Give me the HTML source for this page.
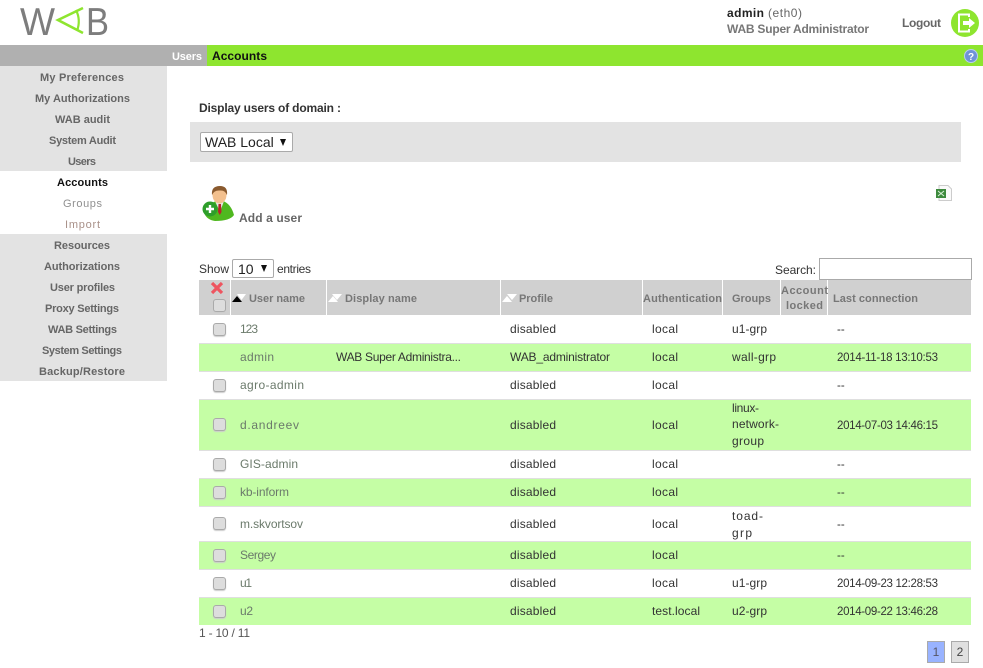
<!DOCTYPE html>
<html><head><meta charset="utf-8"><title>WAB Accounts</title>
<style>
html,body{margin:0;padding:0;background:#fff;width:983px;height:668px;overflow:hidden}
svg{position:absolute;left:0;top:0}
svg text{font-family:"Liberation Sans",sans-serif;font-size:12px;fill:#333}
.m text{text-anchor:middle;font-weight:bold;fill:#666;font-size:11px}
.b{font-weight:bold}
.h text{font-weight:bold;fill:#777;font-size:11px}
.u text{fill:#6b7a6b}
.d text{font-size:11.5px}
.cb{position:absolute;left:213px;width:11px;height:11px;background:#ddd;border:1px solid #aaa;border-radius:3px;box-shadow:0 1px 1px #ccc}
select,input{position:absolute;box-sizing:border-box;font-family:"Liberation Sans",sans-serif;background:#fff;margin:0;color:#222}
select{appearance:none;-webkit-appearance:none}
.ar{position:absolute;width:0;height:0;border-left:3.5px solid transparent;border-right:3.5px solid transparent;border-top:7px solid #111}
.pg{position:absolute;top:641px;width:16px;height:20px;border:1px solid #aaa;font:12px/20px "Liberation Sans",sans-serif;text-align:center;color:#444}
</style></head><body>
<svg width="983" height="668" viewBox="0 0 983 668">
<!-- bars -->
<rect x="0" y="45" width="207" height="21" fill="#b0b0b0"/>
<rect x="207" y="45" width="776" height="21" fill="#8ee52f"/>
<rect x="0" y="66" width="167" height="105" fill="#e3e3e3"/>
<rect x="0" y="234" width="167" height="147" fill="#e3e3e3"/>
<rect x="190" y="122" width="771" height="40" fill="#e3e3e3"/>
<!-- logo -->
<text x="20" y="35" textLength="35" lengthAdjust="spacingAndGlyphs" style="font-size:39px;fill:#7d7d7d">W</text>
<text x="86" y="35" textLength="23" lengthAdjust="spacingAndGlyphs" style="font-size:39px;fill:#7d7d7d">B</text>
<path d="M83 8 L58 20 L83 33" fill="none" stroke="#8ee52f" stroke-width="2.600"/>
<path d="M76 10 Q81 20 77 31" fill="none" stroke="#8ee52f" stroke-width="2.200"/>
<!-- user info -->
<text x="727" y="17" textLength="37" class="b" style="fill:#222">admin</text>
<text x="768" y="17" textLength="34" style="fill:#666">(eth0)</text>
<text x="727" y="33" textLength="142" class="b" style="fill:#777">WAB Super Administrator</text>
<text x="902" y="27" textLength="39" class="b" style="fill:#666">Logout</text>
<circle cx="965" cy="23" r="14" fill="#8ee52f"/>
<path d="M969 17 V14.500 H959 V31.500 H969 V29" fill="none" stroke="#fff" stroke-width="2"/>
<path d="M963 21 H969 V18 L975 23 L969 28 V25 H963 Z" fill="#fff"/>
<circle cx="971" cy="56" r="6.500" fill="#6f93d8" stroke="#b9cdf0"/>
<text x="971" y="60" text-anchor="middle" class="b" style="font-size:10px;fill:#fff">?</text>
<text x="172" y="60" textLength="30" class="b" style="fill:#fff;font-size:11px">Users</text>
<text x="212" y="60" textLength="55" class="b" style="fill:#111">Accounts</text>
<!-- sidebar -->
<g class="m">
<text x="82" y="81" textLength="84">My Preferences</text>
<text x="82.500" y="102" textLength="95">My Authorizations</text>
<text x="82.500" y="123" textLength="55">WAB audit</text>
<text x="82.500" y="144" textLength="67">System Audit</text>
<text x="82" y="165" textLength="28">Users</text>
<text x="82.500" y="186" textLength="51" style="fill:#111">Accounts</text>
<text x="82.500" y="207" textLength="39" style="fill:#909090;font-weight:normal">Groups</text>
<text x="82.500" y="228" textLength="35" style="fill:#a89088;font-weight:normal">Import</text>
<text x="82" y="249" textLength="56">Resources</text>
<text x="82" y="270" textLength="76">Authorizations</text>
<text x="82.500" y="291" textLength="65">User profiles</text>
<text x="82" y="312" textLength="74">Proxy Settings</text>
<text x="82.500" y="333" textLength="69">WAB Settings</text>
<text x="82" y="354" textLength="80">System Settings</text>
<text x="82" y="375" textLength="86">Backup/Restore</text>
</g>
<!-- content titles -->
<text x="199" y="112" textLength="142" class="b">Display users of domain :</text>
<text x="239" y="222" textLength="63" class="b" style="fill:#666">Add a user</text>
<!-- add user icon -->
<path d="M204 213 Q208 203 217 201 L223 201 Q231 204 234 215 Q230 221 215 221 Q207 220 204 213Z" fill="#4fb81f"/>
<path d="M215 201 L220 212 L224 201Z" fill="#e8e8e8"/>
<path d="M218.500 204 L221 204 L221.500 212 L219.800 215 L218 212Z" fill="#b8242a"/>
<ellipse cx="219.500" cy="195" rx="7" ry="8.500" fill="#f3c08e"/>
<path d="M212 195 Q211 186 220 186 Q228 186 227 195 Q225 190 220 190.500 Q214 190 212 195Z" fill="#8a5a2e"/>
<circle cx="210" cy="209" r="7.500" fill="#2e9e2a"/>
<path d="M210 205 V213 M206 209 H214" stroke="#fff" stroke-width="2.400"/>
<!-- xls icon -->
<path d="M939 185.500 H948 L951.500 189 V200.500 H939Z" fill="#fafafa" stroke="#ccc"/>
<rect x="936" y="189" width="10" height="9" fill="#3d8a3d"/>
<path d="M938 191 L944 196 M944 191 L938 196" stroke="#d8f0d8"/>
<!-- controls labels -->
<text x="199" y="273" textLength="30">Show</text>
<text x="277" y="273" textLength="34">entries</text>
<text x="775" y="274" textLength="41">Search:</text>
<!-- table header -->
<rect x="199" y="280" width="772" height="35" fill="#d0d0d0"/>
<g fill="#fff">
<rect x="230" y="280" width="1" height="35"/><rect x="326" y="280" width="1" height="35"/>
<rect x="500" y="280" width="1" height="35"/><rect x="642" y="280" width="1" height="35"/>
<rect x="722" y="280" width="1" height="35"/><rect x="780" y="280" width="1" height="35"/>
<rect x="827" y="280" width="1" height="35"/>
<path d="M237 294 H246 L241.500 300Z"/>
<path d="M332 294 H342 L337 300Z"/><path d="M328 302 L333 296 L338 302Z"/>
<path d="M507 294 H517 L512 300Z"/><path d="M502 302 L507 296 L512 302Z"/>
</g>
<path d="M232 302 L237 296 L242 302Z" fill="#000"/>
<path d="M212 283 L222 293 M222 283 L212 293" stroke="#ee5560" stroke-width="3.200"/>
<g class="h">
<text x="249" y="302" textLength="56">User name</text>
<text x="345" y="302" textLength="72">Display name</text>
<text x="519" y="302" textLength="34">Profile</text>
<text x="643" y="302" textLength="79">Authentication</text>
<text x="732" y="302" textLength="39">Groups</text>
<text x="781" y="294" textLength="47">Account</text>
<text x="786" y="309" textLength="37">locked</text>
<text x="833" y="302" textLength="85">Last connection</text>
</g>
<!-- rows -->
<g fill="#c5fea5">
<rect x="199" y="344" width="772" height="27"/>
<rect x="199" y="400" width="772" height="50"/>
<rect x="199" y="479" width="772" height="27"/>
<rect x="199" y="542" width="772" height="27"/>
<rect x="199" y="598" width="772" height="27"/>
</g>
<g fill="#dfdfdf">
<rect x="199" y="343" width="772" height="1"/><rect x="199" y="371" width="772" height="1"/>
<rect x="199" y="399" width="772" height="1"/><rect x="199" y="450" width="772" height="1"/>
<rect x="199" y="478" width="772" height="1"/><rect x="199" y="506" width="772" height="1"/>
<rect x="199" y="541" width="772" height="1"/><rect x="199" y="569" width="772" height="1"/>
<rect x="199" y="597" width="772" height="1"/>
</g>
<g class="u">
<text x="240" y="333" textLength="18">123</text>
<text x="240" y="361" textLength="34">admin</text>
<text x="240" y="389" textLength="64">agro-admin</text>
<text x="240" y="429" textLength="59">d.andreev</text>
<text x="240" y="468" textLength="58">GIS-admin</text>
<text x="240" y="496" textLength="49">kb-inform</text>
<text x="240" y="528" textLength="63">m.skvortsov</text>
<text x="240" y="559" textLength="36">Sergey</text>
<text x="240" y="587" textLength="12">u1</text>
<text x="240" y="615" textLength="13">u2</text>
</g>
<text x="336" y="361" textLength="125">WAB Super Administra...</text>
<text x="510" y="361" textLength="100">WAB_administrator</text>
<text x="510" y="333" textLength="46">disabled</text>
<text x="510" y="389" textLength="46">disabled</text>
<text x="510" y="429" textLength="46">disabled</text>
<text x="510" y="468" textLength="46">disabled</text>
<text x="510" y="496" textLength="46">disabled</text>
<text x="510" y="528" textLength="46">disabled</text>
<text x="510" y="559" textLength="46">disabled</text>
<text x="510" y="587" textLength="46">disabled</text>
<text x="510" y="615" textLength="46">disabled</text>
<text x="652" y="333" textLength="26">local</text>
<text x="652" y="361" textLength="26">local</text>
<text x="652" y="389" textLength="26">local</text>
<text x="652" y="429" textLength="26">local</text>
<text x="652" y="468" textLength="26">local</text>
<text x="652" y="496" textLength="26">local</text>
<text x="652" y="528" textLength="26">local</text>
<text x="652" y="559" textLength="26">local</text>
<text x="652" y="587" textLength="26">local</text>
<text x="652" y="615" textLength="48">test.local</text>
<text x="732" y="333" textLength="35">u1-grp</text>
<text x="732" y="361" textLength="44">wall-grp</text>
<text x="732" y="412" textLength="27">linux-</text>
<text x="732" y="428" textLength="47">network-</text>
<text x="732" y="445" textLength="32">group</text>
<text x="732" y="520" textLength="31">toad-</text>
<text x="732" y="537" textLength="20">grp</text>
<text x="732" y="587" textLength="35">u1-grp</text>
<text x="732" y="615" textLength="35">u2-grp</text>
<g class="d">
<text x="837" y="333">--</text>
<text x="837" y="361" textLength="101">2014-11-18 13:10:53</text>
<text x="837" y="389">--</text>
<text x="837" y="429" textLength="101">2014-07-03 14:46:15</text>
<text x="837" y="468">--</text>
<text x="837" y="496">--</text>
<text x="837" y="528">--</text>
<text x="837" y="559">--</text>
<text x="837" y="587" textLength="101">2014-09-23 12:28:53</text>
<text x="837" y="615" textLength="101">2014-09-22 13:46:28</text>
</g>
<text x="199" y="637" textLength="51" style="fill:#555">1 - 10 / 11</text>
</svg>

<select style="left:200px;top:132px;width:93px;height:20px;font-size:14px;padding:0 0 0 4px;border:1px solid #aaa;border-radius:2px"><option>WAB Local</option></select>
<div class="ar" style="left:280px;top:139px"></div>
<select style="left:232px;top:259px;width:42px;height:19px;font-size:14px;padding:0 0 0 5px;border:1px solid #aaa;border-radius:2px"><option>10</option></select>
<div class="ar" style="left:261px;top:265px"></div>
<input type="text" style="left:819px;top:258px;width:153px;height:22px;border:1px solid #aaa">

<div class="cb" style="top:299px"></div>
<div class="cb" style="top:323px"></div>
<div class="cb" style="top:379px"></div>
<div class="cb" style="top:418px"></div>
<div class="cb" style="top:458px"></div>
<div class="cb" style="top:486px"></div>
<div class="cb" style="top:517px"></div>
<div class="cb" style="top:549px"></div>
<div class="cb" style="top:577px"></div>
<div class="cb" style="top:605px"></div>

<div class="pg" style="left:927px;background:#99b3ff;color:#556">1</div>
<div class="pg" style="left:951px;background:#e0e0e0">2</div>
</body></html>
